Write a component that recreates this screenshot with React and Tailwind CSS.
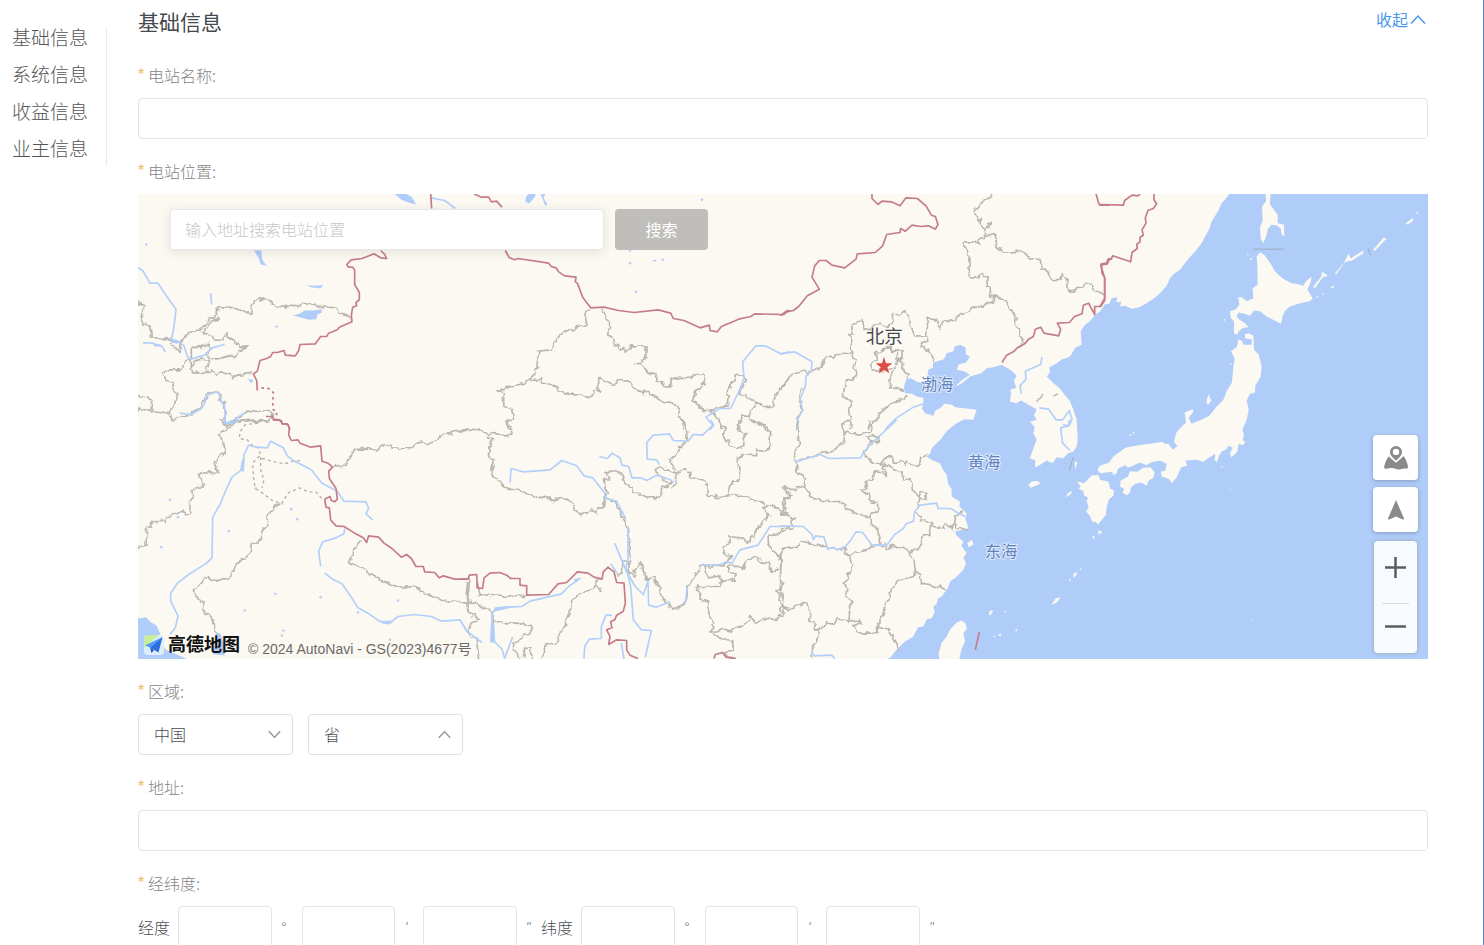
import { useState } from "react";

const NAV_ITEMS = ["基础信息", "系统信息", "收益信息", "业主信息"];

const SEA =
  "3274,0 3264,14 3251,28 3240,52 3221,83 3212,110 3201,128 3192,146 3176,168 3150,196 3126,228 3108,240 3096,253 3086,276 3066,298 3050,312 3026,328 3004,340 2981,345 2962,336 2946,338 2950,324 2935,326 2938,310 2921,313 2914,330 2900,332 2886,353 2871,363 2858,380 2841,393 2828,412 2831,453 2812,462 2796,488 2770,498 2756,508 2734,520 2736,536 2726,548 2744,566 2766,584 2776,598 2796,622 2806,648 2816,678 2819,738 2816,758 2806,773 2790,778 2776,793 2756,790 2744,808 2726,800 2708,812 2691,821 2692,800 2676,793 2684,770 2696,738 2686,718 2690,700 2676,684 2696,678 2688,664 2696,646 2671,633 2650,620 2634,628 2616,623 2618,606 2636,588 2628,560 2636,546 2620,530 2591,513 2566,520 2546,523 2530,538 2496,548 2470,570 2451,578 2470,560 2496,543 2478,532 2456,528 2462,512 2484,506 2496,488 2484,482 2482,460 2466,453 2450,458 2446,472 2426,478 2418,496 2386,506 2384,522 2371,528 2366,563 2340,566 2320,554 2306,553 2298,578 2301,598 2322,600 2336,608 2356,612 2356,628 2352,644 2361,658 2386,666 2392,650 2406,643 2420,630 2441,633 2452,640 2484,644 2516,648 2510,664 2506,678 2480,676 2456,688 2440,700 2426,712 2410,734 2381,763 2376,780 2366,788 2384,800 2406,808 2416,830 2426,843 2430,870 2441,886 2441,908 2466,923 2464,938 2486,958 2482,974 2491,1003 2472,1008 2451,1013 2456,1026 2476,1043 2470,1056 2486,1078 2476,1092 2484,1108 2476,1128 2454,1150 2436,1163 2430,1182 2411,1208 2400,1214 2396,1230 2386,1238 2390,1256 2381,1273 2366,1276 2356,1298 2340,1300 2326,1328 2300,1344 2276,1368 2260,1388 2246,1398 3870,1398 3870,0";

// The map is cut into tiles; every shape is given in its tile's own units.
const TILES = [
  {
    x: 0,
    y: -12,
    water: [
      "465,377 485,372 500,362 525,362 550,358 552,368 538,374 535,388 515,390 490,384",
      "505,286 530,288 556,286 548,296 520,292",
      "348,182 370,182 372,208 386,228 368,224 362,204",
      "768,10 800,10 822,22 834,44 812,38 790,30",
      "98,445 122,452 118,462 100,458",
      "330,566 348,572 338,580",
      "45,462 70,464 68,470 50,470",
    ],
    rivers: [
      "0,234 14,242 36,280 60,280 88,322 114,358 108,410 100,450",
      "120,456 138,468 148,500 158,508 200,496 222,474 260,464",
      "15,459 45,460 72,470 82,486",
      "125,670 160,674 190,656 200,640 206,618 232,606 244,612 250,636 260,648 262,700 290,690 320,668",
      "880,24 920,32 952,56",
      "218,310 221,344",
    ],
    borders: [
      "0,335 4,346 14,344 14,402 36,406 40,444 98,448 98,470 124,482 126,462 140,440 172,422 190,420 206,400 212,386 226,384 228,374 236,374 240,354 292,356 342,376 343,344 362,326 366,334 380,326 420,350 444,352 446,346 488,348 492,340 540,348 592,354 604,370 630,378 638,388",
      "214,402 226,392 244,388 240,382 222,392 196,428 214,436 226,438 230,450 254,452 266,428 268,442 290,452 294,464 304,460 308,472 328,472 300,486 288,500 274,498 236,508 212,506 208,494 214,482 222,476 210,460 186,474 160,472 160,546 216,548 220,540 232,554 256,546 278,552 288,564 300,556 346,550",
      "160,530 172,514 190,508 210,512 214,526 202,540",
      "160,508 140,518 128,540 92,540 74,552 80,562 84,572 108,578 104,592 118,620 104,650 92,668 104,690 124,682 160,676 168,660 190,656 206,612 232,604 244,610 246,630 260,640 262,704 280,698 326,664 362,668 372,662 404,668 406,680 384,694 360,690 300,694 272,712",
      "0,616 42,630 38,666 10,656 0,660",
      "38,666 66,668 92,674",
    ],
    national: [
      "728,182 740,194 746,206 728,204 708,192 672,206 640,210 626,224 632,232 644,232 650,240 650,284 664,308 664,330 654,338 656,348 644,352 640,376 642,396 628,402 604,412 598,420 572,430 566,440 548,440 532,462 486,464 482,482 472,498 442,496 438,482 418,488 404,488 398,500 386,506 366,512 358,544 346,552 356,572 358,602",
      "878,10 881,56",
      "384,680 404,680 406,688 424,690 434,702 450,704 456,720",
    ],
    disputed: ["370,594 392,596 406,608 404,640 406,660 416,664 416,674 400,676"],
  },
  {
    x: 0,
    y: 678,
    water: [
      "0,596 24,592 36,606 56,618 66,640 70,670 84,690 148,718 0,718",
      "234,640 246,640 256,664 260,706 226,704",
      "312,120 320,118 318,156 306,152",
      "720,604 760,602 756,614 736,612",
    ],
    rivers: [
      "330,76 356,82 388,84 398,64 436,84 448,108 466,122 520,150 552,190 598,214 618,244 684,246 692,266 684,282 704,300",
      "332,76 318,104 314,148 282,172 266,206 246,254 224,292 222,414 206,430 152,464 118,490 98,520 98,544 120,588 112,624 96,644",
      "620,326 618,342 594,354 554,366 542,394 548,440",
      "560,460 584,478 612,492 640,532 660,564 690,580 724,604 756,610 780,590 830,584 880,590 910,604 966,600 988,636",
      "254,0 262,12 290,8 300,0",
    ],
    borders: [
      "272,14 244,44 258,76 262,98 244,110 232,130 242,158 184,160 192,186 200,196 162,210 164,236 154,244 158,280 146,284 136,274 86,292 84,304 46,306 42,318 26,320 24,376 0,384",
      "430,252 410,260 390,286 392,314 372,334 366,360 340,374 336,396 320,416 294,434 288,450 270,474 222,486 212,468 196,474 194,486 170,512 172,534 198,544 192,574 216,590 226,604 238,640",
      "990,28 962,34 912,44 900,60 870,72 852,66 836,70 820,86 762,88 760,74 740,74 716,90 680,84 648,86 640,108 626,136 588,138",
      "668,362 652,380 648,404 634,424 640,434 664,440 700,464 740,486 776,500 812,502 834,498 846,516 884,530 930,546 990,550",
      "990,486 984,524 990,578",
      "248,0 262,16 272,12 300,4 384,2",
    ],
    national: [
      "404,0 430,2 432,12 448,12 454,24 452,46 460,62 480,60 486,70 518,82 548,78 552,124 570,130 584,142 572,154 574,176 594,206 598,238 590,246 580,242 576,230 560,238 564,262 574,264 578,300 594,318 618,320 650,340 676,354 686,368 692,348 722,352 738,370 762,386 790,412 806,404 820,416 834,440 856,440 860,456 890,458 904,474 916,468 950,478 990,478",
    ],
    dashed: [
      "360,10 322,14 306,36 304,56 328,60 342,76 360,84 368,104 368,150 378,180 372,204",
      "364,108 344,130 346,170 352,206 374,220 400,240 430,252 450,220 484,204 510,216 534,216 552,236",
      "372,116 410,126 440,132 466,124 494,122",
    ],
  },
  {
    x: 966,
    y: -12,
    water: [
      "206,10 228,10 224,22 208,40 196,36 198,22",
      "242,14 258,10 250,24 262,44 256,48",
      "574,212 590,210 586,216",
    ],
    rivers: [
      "990,486 962,492 916,468 888,468 848,516 852,566 838,602 812,656 778,656 738,682 760,708 750,720",
    ],
    borders: [
      "392,356 374,372 380,404 354,410 340,424 332,416 302,434 278,464 274,480 236,484 230,536 212,570",
      "428,358 440,388 452,412 446,434 464,462 476,464 478,484 492,472 496,484 508,480 514,468 558,468 558,500 544,520 526,522 542,524 562,544 586,554 588,574 606,576 612,590 632,592 634,568 660,562 692,566 706,552 730,550 736,576 724,582 720,598 704,604 698,634 730,662 752,662 802,644 806,600 826,558 848,554 856,572 838,614 870,624 888,640 904,642 908,650 938,650 942,626 958,600 990,560",
      "114,606 130,596 164,590 212,570 244,566 248,580 280,590 282,584 296,606 334,612 362,612 384,624 400,616 402,602 416,602 416,562 464,586 476,572 508,574 520,590 552,614 554,600 574,614 612,634 636,640 658,660 656,682 672,700 670,718",
      "112,606 130,610 132,648 158,660 164,686 138,694 144,712 156,720",
      "752,666 768,678 782,700 784,720",
      "884,644 874,660 870,680 846,678 842,702 832,704 836,720",
      "870,688 888,700 910,704 930,720",
    ],
    national: [
      "42,12 64,22 86,22 94,36 110,34 126,52",
      "136,182 148,204 164,210 174,206 266,220 274,230 288,234 296,246 314,258 348,262 346,276 352,280 368,322 392,354 432,352 476,362 522,368 594,360 632,370 640,386 672,392 720,414 748,406 750,422 772,426 784,410 836,388 872,380 884,372 966,374 982,362 990,364",
    ],
  },
  {
    x: 966,
    y: 678,
    water: [
      "104,562 130,560 180,558 100,576",
      "94,600 102,600 106,668 90,668",
      "340,478 362,474 350,488",
    ],
    rivers: [
      "150,188 153,146 190,156 270,150 306,122 350,138 372,168 398,174 414,194 434,220 436,234 470,246 484,272 496,294",
      "418,110 442,116 456,100 480,114 486,136 506,140 516,174 542,174 560,182 590,166 632,180 642,190",
      "752,0 760,14 728,46 700,44 684,64 640,62 628,42 580,46 560,68 562,118 590,120 598,134",
      "504,320 504,420 498,440 512,500 520,600 544,630 574,632 556,712",
      "464,370 498,452 526,500 550,524 564,484 566,556 588,562 630,546",
      "452,432 472,462",
      "722,436 780,434 800,426 816,430 840,390 894,376 930,320 990,320",
      "362,474 326,500 304,522 210,544 186,560 112,564 96,580 94,660",
      "456,586 438,586 424,620 424,656 388,658 374,680 372,716",
      "0,600 20,634 66,668",
      "100,662 126,688 134,716 150,672 158,652",
      "484,670 492,718",
      "682,500 676,550",
    ],
    borders: [
      "0,34 22,28 60,30 84,42 96,38 130,48 156,46 154,22 140,10 146,0",
      "84,42 80,54 98,56 96,74 86,84 90,112 104,122 92,158 110,176 136,206 172,206 208,226 256,232 280,242 306,232 340,250 346,272 360,282 378,276 380,284 394,266 408,280 412,264 430,264 434,234 444,216 434,202 434,180 446,176 438,158 456,150 480,158 496,190 516,202 518,218 540,222 560,232 576,230 580,236 602,228 606,200 626,200 632,186 624,192 590,166 586,148 604,140 636,156 650,160 650,188 638,202",
      "650,160 668,154 680,146 690,158 688,172 734,182 734,194 744,196 744,226 776,234 806,224 836,230 856,228 872,242 886,240 924,256 940,258 970,282 990,288",
      "664,0 672,16 680,36 682,62 670,70 668,80 656,80 650,106 634,116 634,134 646,152",
      "780,0 784,20 796,24 788,42 798,66 806,58 814,80 830,88 852,76 850,60 858,40 840,34 836,0",
      "870,0 912,16 914,26 932,36 928,90 890,90 890,108 844,104 834,112 840,150 836,184 814,184 806,222",
      "924,256 912,268 926,288 900,320 892,318 880,352 870,350 866,368 844,354 806,350 808,368 786,382 790,400 812,408 804,430 770,440 720,436 718,452 702,468 694,488 680,500 682,528 676,550 640,568 618,548 612,530 600,520 600,502 580,474 560,482 554,452 540,430 522,448 524,468 508,458 506,428 488,420 488,458 472,466",
      "436,234 468,246 480,270 484,290 496,296 490,304 504,330 510,430",
      "736,440 738,462 746,474 780,468 784,484 826,480 824,462 806,456 802,440 830,436 850,448 860,424 884,410 910,432 924,424 934,456 962,442 966,412 952,404 926,380 924,346 960,340 990,320",
      "990,380 970,388 962,410 962,500 950,512 962,520 956,540 968,560 990,566",
      "780,484 780,500 716,500 712,514 722,518 720,538 752,544 744,560 748,590 762,610 752,636 776,632 786,626 812,634 870,604 868,590 890,608 930,594 948,602 960,584 968,588 970,560",
      "752,636 776,654 818,662 820,694 794,698 802,710 824,716",
      "30,476 24,520 24,548 32,544 40,552 50,544 60,560 94,572 102,608 170,610 216,618 206,642 162,670 160,690 180,716",
      "52,490 60,524 124,530 200,526",
      "24,548 24,576 40,582 40,594 60,600 34,610 24,630 28,650 48,654 56,718",
      "424,516 412,500 380,510 336,540 330,580 318,590 316,620 300,640 292,674 256,668 256,690 246,716",
      "410,500 408,480 424,476",
      "190,716 194,686 210,684 214,716",
      "990,202 970,204 990,220",
      "990,236 974,236 974,276 990,280",
    ],
    national: [
      "0,478 24,478 28,466 50,464 52,504 68,506 72,474 90,460 120,458 140,466 152,476 180,476 180,496 200,498 200,526 266,524 294,492 320,488 352,456 384,460 402,472 426,478 430,456 444,442 462,456 470,488 492,490 496,550 490,574 470,586 464,600 452,606 456,624 440,630 450,650 446,674 470,660 500,662 500,690 510,706 534,716",
      "762,716 766,704 788,698 798,712 828,716",
    ],
  },
  {
    x: 1926,
    y: -12,
    land: ["690,600 722,590 726,620 700,636"],
    rivers: [
      "0,492 44,486 96,516 94,540 78,560 76,590 60,628 68,660 52,690 54,720",
      "430,642 400,652 350,684 316,718",
      "786,502 782,524 736,544 738,568 720,588 724,612",
      "778,654 806,658 828,690 848,690 868,662 876,688 868,706 840,716",
    ],
    borders: [
      "640,10 630,24 612,34 582,64 594,92 604,88 600,102 614,112 634,98 630,110 612,112 614,140 596,150 596,168 584,156 550,156 552,172 566,182 568,264 590,264 608,252 620,262 622,286 630,290 632,316 640,318 640,340 620,338 612,352 580,352 566,368 540,374 524,388 492,394 480,418 468,392 444,382 440,438 404,438 392,410 388,378 370,362 358,374 338,374 336,398 320,410 300,400 270,420 252,416 248,392 232,392 230,404 216,406 216,428 206,434 214,450 210,468 218,490 166,492 164,504 138,502 116,538 90,544 86,556 78,542 30,556 0,600",
      "640,318 660,324 684,340 702,374 708,388 706,406 718,418 720,440 732,460 714,474",
      "614,140 646,134 650,168 670,188 720,184 752,204 780,206 786,240 806,242 814,272 840,272 844,250 862,274 866,304 886,300 890,290 912,290 914,280 934,284 940,300 972,312",
      "440,440 440,456 424,462 436,480 450,486 464,514",
      "218,490 216,506 228,512 222,534 230,548 218,570 196,574 190,620 214,636 206,660 214,700 206,718",
      "286,488 304,486 314,476 334,474 332,484 352,484 352,510 346,530 320,540 308,548 300,540 274,540 272,520 290,508 286,488",
      "352,484 366,480 366,500 356,510 372,520 370,544 388,554 380,566",
      "346,534 330,560 332,590 352,594 370,602",
      "380,616 370,630 336,640 300,670 296,684 270,706 268,718",
      "0,376 6,376",
      "66,590 58,630 68,660 50,690 52,720",
      "770,632 784,622 792,616",
      "820,620 836,612",
    ],
    national: [
      "0,376 12,374 20,366 40,362 56,350 82,318 118,298 96,262 104,228 118,212 138,212 156,226 194,234 228,208 232,192 286,188 308,168 320,134 360,128 362,116 376,124 396,106 422,110 446,108 466,118 474,104 466,80 454,76 438,48 412,26 378,24 360,48 334,36 306,34 294,44 276,26 276,12",
      "666,518 680,496 700,486 712,474 734,462 746,448 760,440 766,418 782,412 792,430 836,438 842,418 832,400 868,398 884,380 906,372 910,346 926,340 932,352 944,374 944,350 962,350 974,332 974,264 962,226 982,222 990,204",
      "948,12 956,40 960,46 990,46",
    ],
  },
  {
    x: 1926,
    y: 678,
    land: [
      "545,602 558,612 560,628 550,640 555,664 544,690 538,718 478,718 476,700 484,670 500,650 510,630 530,608",
      "745,195 756,184 776,184 780,192 762,200 752,204",
      "528,278 552,282 560,290 540,292",
      "856,232 864,220 876,212 872,224",
      "814,556 826,536 842,532 830,548",
      "880,474 880,462 892,456 888,468",
      "866,484 870,476 872,484",
      "626,584 630,572 640,572 632,586",
      "654,646 662,640 662,650",
      "640,648 646,646 644,654",
      "704,630 712,628 710,636",
      "562,370 576,360 580,374 566,382",
      "936,350 944,348 942,358",
      "955,330 962,336 956,346",
      "884,124 892,128 886,150",
      "670,574 680,574 676,578",
      "898,448 904,444 904,450",
    ],
    rivers: [
      "46,126 100,110 120,104 146,116 242,114 250,100 270,74 310,38 350,0",
      "0,318 70,320 96,344 100,360 106,348 132,352 144,388 160,382 170,390 196,380 210,364 228,336 248,338 276,376 320,376 344,344 370,326 378,312 400,304 404,276 420,256 470,250 474,266 512,266 536,280 556,290",
      "94,692 102,708 156,706 164,716",
      "848,14 866,18 868,0",
      "848,20 842,26 848,70 870,92",
    ],
    borders: [
      "50,0 58,76 44,104 44,126 110,104 160,94 168,80 190,70 196,36 240,46 262,36 268,40 276,18 266,0",
      "196,36 188,16 204,0",
      "262,56 278,48 298,50 294,64 272,66 264,56",
      "272,66 268,78 248,98 272,124 304,134 318,110 338,112 340,130 360,124 374,136 380,124 400,136 418,136 422,112 444,104",
      "46,126 54,144 50,152 76,180 74,204 50,200 44,210 10,204 20,220 38,226 12,234 14,280 0,282",
      "74,204 90,220 92,234 160,248 192,248 198,268 220,278 270,296 272,314 292,322 300,376",
      "310,132 314,150 324,170 306,158 282,156 280,180 256,188 260,204 246,210 268,228 270,242 292,246 294,276 272,280 270,296",
      "310,132 346,152 366,156 368,176 390,180 398,210 420,234 412,268",
      "420,234 438,240 438,220 420,216 418,236",
      "404,276 420,290 424,304 456,308 460,320 490,324 494,312 516,324 524,306 528,284 552,276",
      "524,306 530,326 560,328",
      "456,308 448,320 450,344 428,352 424,376 396,396 388,400 402,420 406,454 400,466 372,476 346,488 342,504 328,518 322,548 310,560 312,580 300,590 300,612 290,622 290,640",
      "388,400 380,388 352,384 338,376 322,390 316,376 276,378 262,392 226,398 208,410 198,402 194,384 166,394 156,384 120,378 60,362 52,382 6,388 0,420",
      "406,454 422,464 424,490 448,494 460,502 482,498 494,510",
      "208,410 216,434 212,454 200,462 204,480 190,490 200,504 198,524 214,544 206,604",
      "0,480 8,484 2,510 10,530 6,560 22,574 44,560 84,550 90,580 86,604 104,606 106,628 134,620 136,606 160,616 172,598 206,604 238,600 240,608 220,620 240,640 290,640 294,622 330,632 340,660 356,690",
      "106,628 118,636 110,664 94,690 94,718",
      "0,282 20,282 40,296 38,324 20,326 0,340",
      "0,560 6,580",
    ],
    coast: ["880,112 868,152"],
    national: ["598,636 586,690"],
  },
  {
    x: 2886,
    y: -12,
    land: [
      "497,10 512,10 510,44 524,62 533,75 533,100 552,105 553,140 545,134 542,116 530,106 515,105 504,116 500,134 490,160 482,146 480,112 488,92 486,50 498,34",
      "480,187 494,196 500,205 512,222 525,245 548,266 575,280 588,282 610,288 620,272 635,261 632,278 622,300 630,312 638,326 628,334 600,340 570,350 556,362 548,378 543,402 520,390 500,380 480,364 462,362 450,378 434,372 415,368 410,380 418,390 432,398 447,412 430,414 416,424 412,434 402,432 402,395 392,384 390,364 408,358 418,344 415,322 426,322 440,334 460,325 458,295 473,285 472,230 470,200",
      "640,290 664,260 666,246 684,258 668,262 644,296",
      "704,252 730,222 746,192 752,206 790,182 790,190 756,212 736,216 708,254",
      "820,180 850,144 860,146 846,160 824,184",
      "916,102 940,84 938,94 922,104",
      "948,68 954,66 954,74",
      "690,292 702,288 700,296",
      "648,322 654,318 654,324",
      "666,312 672,310 670,316",
      "440,190 446,194 444,198",
      "450,204 458,208 452,212",
      "320,640 320,630 328,612 330,626 334,630 326,644",
      "370,388 376,388 374,394",
      "388,520 394,520 394,526",
      // northern main island, continued by the next tile down
      "415,450 426,452 430,465 455,465 455,448 436,446 434,434 446,430 460,438 462,480 476,494 480,510 485,530 482,560 466,588 465,608 450,612 440,632 446,660 440,690 427,720 432,734 428,750 436,758 428,766 416,762 412,786 394,802 390,790 398,774 386,768 378,780 366,784 358,796 350,818 344,810 346,792 324,806 310,816 290,810 256,812 262,828 244,832 230,862 216,880 208,868 186,860 182,846 196,842 200,822 180,812 152,818 140,826 120,818 84,834 76,826 54,836 50,850 40,856 36,846 0,850 -8,840 0,828 28,818 40,800 76,774 108,768 130,764 150,762 188,756 192,762 206,762 212,772 220,780 232,768 222,756 228,730 256,696 240,718 258,698 254,668 278,658 280,666 266,684 274,702 304,690 328,678 350,650 370,630 382,600 396,578 400,530 404,506 393,484 410,472",
    ],
    coast: ["460,178 550,178", "804,176 812,196"],
    national: [
      "162,10 162,30 170,42 160,56 144,62 136,84 138,100 126,120 130,136 120,142 120,156 110,164 112,176 96,188 92,216 38,198 34,208 24,208 20,220 4,222 6,250 14,264 14,326 0,350",
      "0,44 70,46 74,32 96,16 114,18 122,10",
    ],
  },
  {
    x: 2886,
    y: 678,
    land: [
      "0,180 26,186 30,206 42,212 40,228 26,240 20,262 18,284 6,300 -6,314 -14,306 -24,306 -30,288 -42,276 -34,262 -40,244 -36,234 -48,226 -50,214 -64,206 -58,200 -70,184 -48,190 -36,178 -24,166 -4,166",
      "62,182 84,170 90,154 112,156 130,144 152,142 164,158 160,174 146,182 140,198 124,188 106,192 92,204 90,218 80,226 68,218 72,206 60,200",
      "86,46 94,42 92,50",
      "98,38 104,36 102,44",
      "362,140 370,140 366,144",
      "386,208 392,206 390,210",
      "452,598 458,598 456,602",
      "0,336 6,334 4,344",
    ],
  },
];

// small ponds: x, y in map units
const PONDS = [
  [25, 152], [416, 398], [120, 970], [96, 918], [272, 1012], [460, 946], [478, 976], [412, 1200], [548, 1210],
  [436, 1310], [432, 1325], [756, 1338], [780, 1220], [1476, 170], [1476, 208], [1494, 294], [1692, 18], [1574, 198],
  [320, 1250], [660, 1256], [70, 1060], [353, 884],
];

const PROVINCES = ["省", "北京", "上海", "江苏", "浙江"];

function Lines({ items = [], ...rest }) {
  return items.map((points) => <polyline key={points} points={points} {...rest} />);
}

function Shapes({ items = [], ...rest }) {
  return items.map((points) => <polygon key={points} points={points} {...rest} />);
}

function MapCanvas() {
  return (
    <svg
      viewBox="0 0 3870 1396"
      preserveAspectRatio="xMidYMid slice"
      className="block h-full w-full"
      fill="none"
      strokeLinejoin="round"
      aria-hidden="true"
    >
      {/* roughens the borders a little so they don't read as straight segments */}
      <filter id="rough" filterUnits="userSpaceOnUse" x="-80" y="0" width="1160" height="730">
        <feTurbulence type="fractalNoise" baseFrequency="0.05" numOctaves="2" seed="4" />
        <feDisplacementMap in="SourceGraphic" scale="18" xChannelSelector="R" yChannelSelector="G" />
      </filter>
      <rect width="3870" height="1396" fill="#fbf9f2" />
      <polygon points={SEA} fill="#b0cdf9" />
      {TILES.map((tile) => (
        <g key={`${tile.x}:${tile.y}`} transform={`translate(${tile.x} ${tile.y})`}>
          <Shapes items={tile.land} fill="#fbf9f2" />
          <Shapes items={tile.water} fill="#b0cdf9" />
          <g filter="url(#rough)">
            <Lines items={tile.borders} stroke="#b9b7b0" strokeWidth="5" />
          </g>
          <Lines items={tile.dashed} stroke="#b3b1ac" strokeWidth="4" strokeDasharray="9 9" />
          <Lines items={tile.coast} stroke="#a3b2c9" strokeWidth="4" />
          <Lines items={tile.rivers} stroke="#b3d0fa" strokeWidth="5" />
          <Lines items={tile.national} stroke="#c67c88" strokeWidth="5" />
          <Lines items={tile.disputed} stroke="#c67c88" strokeWidth="5" strokeDasharray="8 10" />
        </g>
      ))}
      {PONDS.map(([x, y]) => (
        <circle key={`${x}-${y}`} cx={x} cy={y} r="4" fill="#b9d1f8" />
      ))}
      <polygon
        points="2238,489 2244,508 2263,508 2248,520 2254,539 2238,527 2222,539 2228,520 2213,508 2232,508"
        fill="#de4b47"
      />
      <g
        textAnchor="middle"
        className="font-['Noto_Sans_CJK_SC',sans-serif] font-normal"
        stroke="#ffffff"
        strokeOpacity="0.6"
        strokeWidth="6"
        paintOrder="stroke"
      >
        <text x="2239" y="449" fontSize="56" fill="#4a4a4a">北京</text>
        <g fontSize="49" fill="#6484bb">
          <text x="2397" y="590">渤海</text>
          <text x="2538" y="823">黄海</text>
          <text x="2589" y="1091">东海</text>
        </g>
      </g>
    </svg>
  );
}

function Chevron({ up, className }) {
  return (
    <svg viewBox="0 0 16 10" className={className} fill="none" stroke="currentColor" aria-hidden="true">
      <path d={up ? "M1 9 8 1.5 15 9" : "M1 1 8 8.5 15 1"} />
    </svg>
  );
}

function Label({ children, htmlFor }) {
  return (
    <label htmlFor={htmlFor} className="mt-5 mb-[11px] flex h-6 items-center text-base leading-[22px] text-[#858585]">
      <span className="w-[10px] font-['Liberation_Sans',sans-serif] text-[#f0b860]">*</span>
      {children}
    </label>
  );
}

function TextInput({ className = "w-full", ...rest }) {
  return (
    <input
      type="text"
      className={`h-[41px] rounded border border-[#e4e4e4] bg-white px-4 text-base text-[#606266] outline-none ${className}`}
      {...rest}
    />
  );
}

function Select({ id, label, options, open }) {
  return (
    <div className="relative w-[155px]">
      <select
        id={id}
        aria-label={label}
        className="h-[41px] w-full appearance-none rounded border border-[#e0e0e0] bg-white px-[15px] pb-0.5 text-base text-[#4c4e52] outline-none"
      >
        {options.map((o) => (
          <option key={o}>{o}</option>
        ))}
      </select>
      <Chevron
        up={open}
        className="pointer-events-none absolute top-4 right-3 h-[9px] w-[13px] stroke-[1.5] text-[#8c8c8c]"
      />
    </div>
  );
}

function Mark({ children, className = "" }) {
  return <span className={`w-6 text-center text-sm text-[#606266] ${className}`}>{children}</span>;
}

function Coordinate({ name }) {
  return (
    <>
      <span className="mr-2 text-base text-[#4c4e52]">{name}</span>
      <TextInput className="w-[94px]" aria-label={`${name}度`} />
      <Mark className="mr-1.5">°</Mark>
      <TextInput className="w-[93px]" aria-label={`${name}分`} />
      <Mark className="mr-1">′</Mark>
      <TextInput className="w-[94px]" aria-label={`${name}秒`} />
      <Mark>″</Mark>
    </>
  );
}

function MapControls() {
  const square =
    "flex h-[45px] w-[45px] items-center justify-center rounded bg-white text-[#8a8a8a] shadow-[0_1px_4px_rgba(0,0,0,0.25)]";
  return (
    <div className="absolute right-[10px] bottom-[6px] flex flex-col items-center">
      <button type="button" aria-label="地点" className={square}>
        <svg viewBox="0 0 24 24" className="h-6 w-6" fill="currentColor">
          <path
            fillRule="evenodd"
            d="M12 0a6 6 0 0 1 6 6c0 3.600-3.500 6.200-6 8.800C9.500 12.200 6 9.600 6 6a6 6 0 0 1 6-6Zm0 2.700a3.200 3.200 0 1 0 0 6.400 3.200 3.200 0 0 0 0-6.400Z"
          />
          <path d="M4.900 10.300c1.600 2.300 4.800 4.500 7.100 6.400 2.300-1.900 5.500-4.100 7.100-6.400l1.100.5c1.600 2.400 3 5.700 3.700 9.100.3 1.900-.5 2.900-2 2.700-1.600-.3-3.200.1-5.300.7-3.500 1-5.800-1.200-8.600-1.300-2.200 0-3.900.9-6.200.7-1.400-.1-1.900-1-1.600-2.300.8-3.500 2.500-7.500 4.700-10.100Z" />
        </svg>
      </button>
      <button type="button" aria-label="定位" className={`mt-[7px] ${square}`}>
        <svg viewBox="0 0 16 20" className="h-5 w-4" fill="currentColor">
          <path d="M8 0 16 18.500Q16 20 14.700 19.400L8 16.500 1.300 19.400Q0 20 0 18.500Z" />
        </svg>
      </button>
      <div className="mt-[9px] flex w-[43px] flex-col items-center rounded-sm bg-white/90 text-[#5c5c5c] shadow-[0_0_4px_rgba(120,100,60,0.4)]">
        <button type="button" aria-label="放大" className="flex h-[62px] w-full items-center justify-center pb-2.5">
          <svg viewBox="0 0 21 21" className="h-[21px] w-[21px]" stroke="currentColor" strokeWidth="2.500">
            <path d="M0 10.500h21M10.500 0v21" />
          </svg>
        </button>
        <span className="h-px w-[27px] bg-[#dcdcdc]" />
        <button type="button" aria-label="缩小" className="flex h-[49px] w-full items-center justify-center pb-1">
          <svg viewBox="0 0 21 21" className="h-[21px] w-[21px]" stroke="currentColor" strokeWidth="2.500">
            <path d="M0 10.500h21" />
          </svg>
        </button>
      </div>
    </div>
  );
}

function StationMap() {
  return (
    <div className="relative h-[465px] overflow-hidden">
      <MapCanvas />
      <div className="absolute top-[15px] left-8 flex gap-[11px]">
        <input
          id="location"
          type="text"
          placeholder="输入地址搜索电站位置"
          className="h-[41px] w-[434px] rounded border border-[#e8e8e8] bg-white px-[14px] pb-0.5 text-base text-[#606266] shadow-[0_2px_12px_rgba(0,0,0,0.1)] outline-none placeholder:text-[#c8c8c8]"
        />
        <button type="button" className="h-[41px] w-[93px] rounded-sm bg-[#bfbeba] pb-0.5 text-base font-normal text-white">
          搜索
        </button>
      </div>
      <div className="absolute bottom-0 left-1.5 flex h-7 items-center">
        <svg viewBox="0 0 20 20" className="h-5 w-5" aria-hidden="true">
          <rect width="20" height="20" rx="4" fill="#dfeefb" />
          <path d="M0 4Q0 0 4 0h11L0 13Z" fill="#c9ec9a" />
          <path d="M18.500 2 1 10.500 6 12.500Z" fill="#4e9bf5" />
          <path d="M18.500 2 6 12.500 14.500 17.500Z" fill="#2c6fe0" />
          <path d="M6 12.500 7.500 18 10 15Z" fill="#1f56b8" />
        </svg>
        <span className="mb-1 ml-1 text-lg leading-5 font-bold text-[#111111]">高德地图</span>
        <span className="mt-2 ml-2 font-['Liberation_Sans','Noto_Sans_CJK_SC',sans-serif] text-sm leading-5 font-normal text-[#6a6a6a]">
          © 2024 AutoNavi - GS(2023)4677号
        </span>
      </div>
      <MapControls />
    </div>
  );
}

export default function App() {
  const [collapsed, setCollapsed] = useState(false);

  return (
    <div className="flex h-screen overflow-y-auto border-r border-[#4f87e0] bg-white font-['Noto_Sans_CJK_SC',sans-serif] font-light [scrollbar-width:none]">
      <nav className="mt-[18px] w-[107px] shrink-0">
        <ul className="text-[19px] leading-[37px] text-[#555555]">
          {NAV_ITEMS.map((item) => (
            <li key={item} className="pl-3">
              <a href={`#${item}`}>{item}</a>
            </li>
          ))}
        </ul>
      </nav>
      <div className="mt-7 -ml-px h-[138px] w-px shrink-0 bg-[#e8e8e8]" />

      <main className="ml-[31px] min-w-0 flex-1 pr-[55px]">
        <div className="flex h-[43px] items-start justify-between">
          <h2 className="mt-1.5 text-[21px] leading-[30px] font-normal text-[#45484d]">基础信息</h2>
          <button
            type="button"
            onClick={() => setCollapsed(!collapsed)}
            className="mt-[7px] mr-0.5 flex h-6 items-center gap-0.5 text-base font-normal text-[#4a97ee]"
          >
            收起
            <Chevron up={!collapsed} className="h-[11px] w-4 stroke-[1.5]" />
          </button>
        </div>

        {!collapsed && (
          <form className="pb-6">
            <Label htmlFor="name">电站名称:</Label>
            <TextInput id="name" className="block w-full" />

            <Label htmlFor="location">电站位置:</Label>
            <StationMap />

            <Label htmlFor="country">区域:</Label>
            <div className="flex gap-[15px]">
              <Select id="country" label="国家" options={["中国"]} />
              <Select id="province" label="省" options={PROVINCES} open />
            </div>

            <Label htmlFor="address">地址:</Label>
            <TextInput id="address" className="block w-full" />

            <Label>经纬度:</Label>
            <div className="flex items-center">
              <Coordinate name="经度" />
              <Coordinate name="纬度" />
            </div>
          </form>
        )}
      </main>
    </div>
  );
}
